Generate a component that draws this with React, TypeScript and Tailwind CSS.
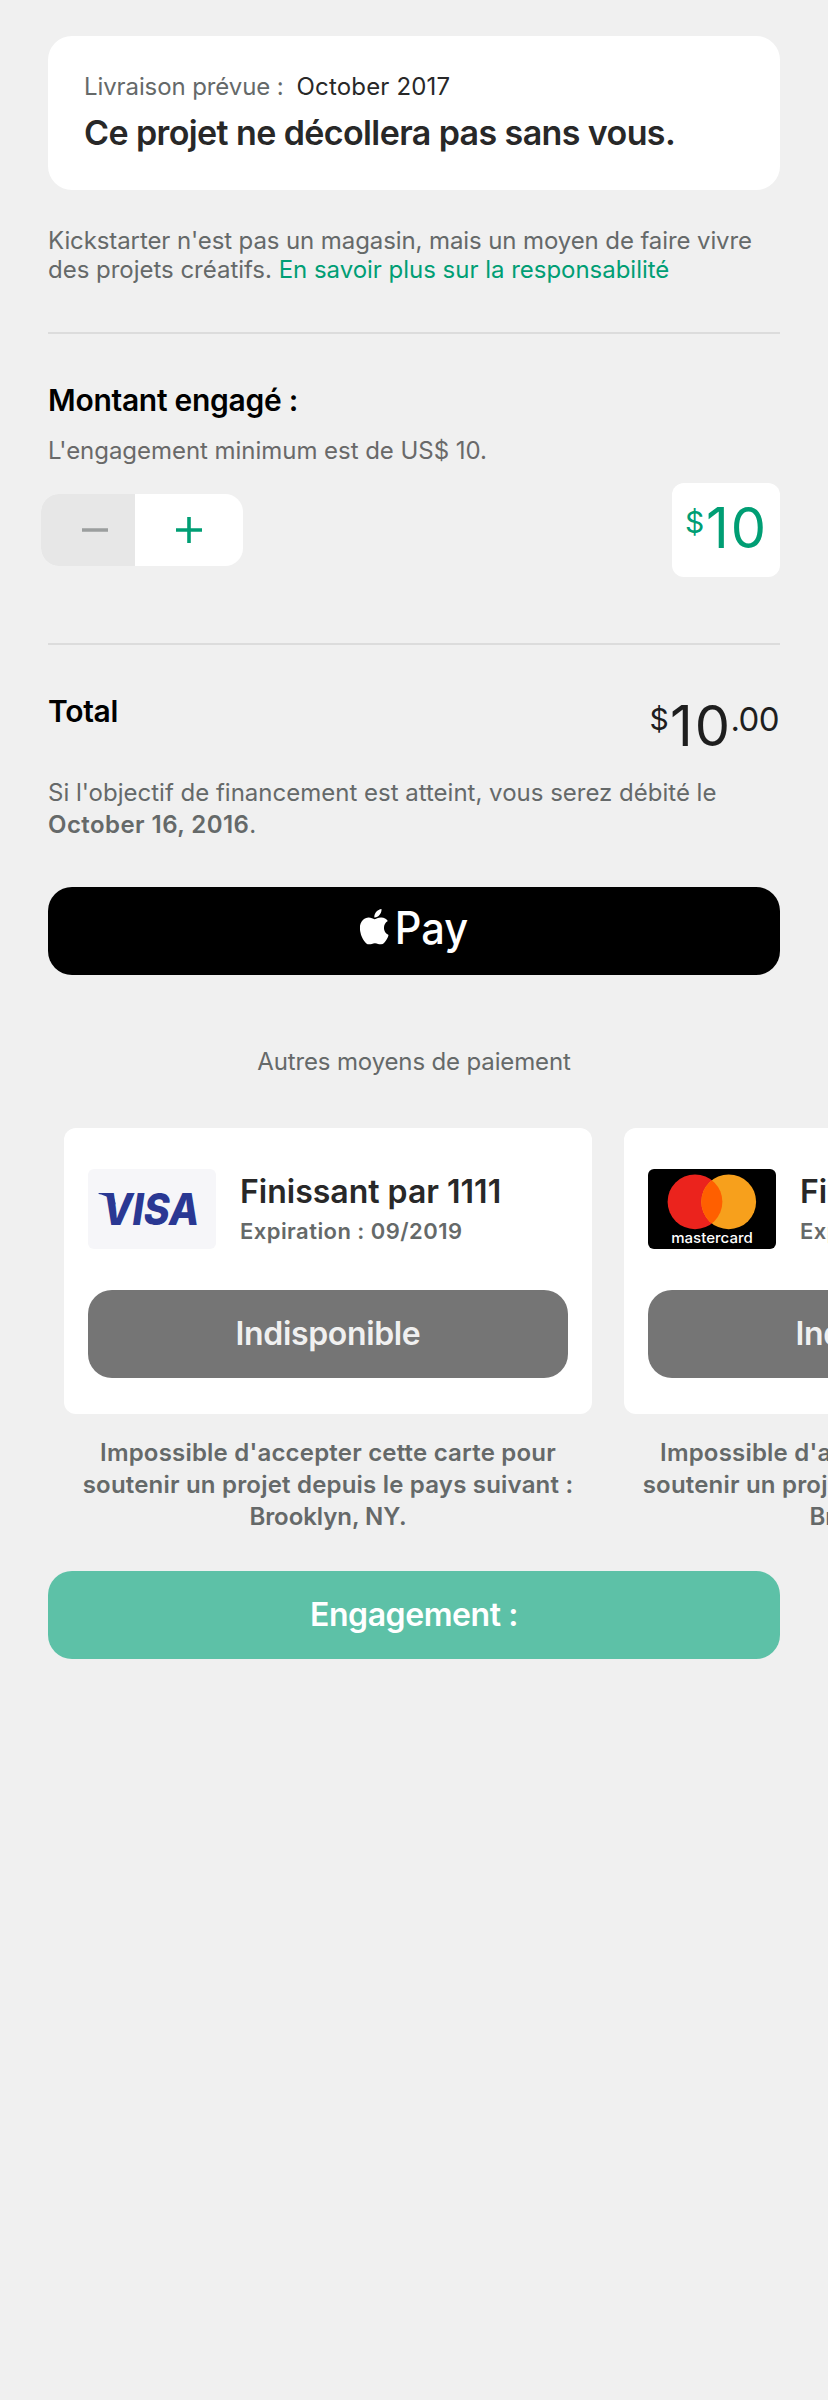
const cards = [
  { brand: "visa", title: "Finissant par 1111", expiry: "Expiration : 09/2019" },
  { brand: "mastercard", title: "Finissant par 4444", expiry: "Expiration : 10/2019" },
];

function VisaLogo() {
  return (
    <svg className="block h-20 w-32 shrink-0" viewBox="0 0 128 80">
      <rect width="128" height="80" rx="6" fill="#f6f6f9" />
      <path d="M10.6 23.9H24.5L28 36C24.5 29.5 18 26.3 10.6 24.9Z" fill="#2a3893" />
      <text
        x="14.2"
        y="55.6"
        fontFamily="Inter, sans-serif"
        fontSize="43.8"
        fontWeight="800"
        fontStyle="italic"
        fill="#2a3893"
        textLength="97"
        lengthAdjust="spacingAndGlyphs"
      >
        VISA
      </text>
    </svg>
  );
}

function MastercardLogo() {
  return (
    <svg className="block h-20 w-32 shrink-0" viewBox="0 0 128 80">
      <defs>
        <clipPath id="mc-left">
          <circle cx="47" cy="32.8" r="27.4" />
        </clipPath>
      </defs>
      <rect width="128" height="80" rx="6" fill="#000" />
      <circle cx="47" cy="32.8" r="27.4" fill="#eb231d" />
      <circle cx="80.7" cy="32.8" r="27.4" fill="#f7a01c" />
      <circle cx="80.7" cy="32.8" r="27.4" fill="#ff5f00" clipPath="url(#mc-left)" />
      <text
        x="23.2"
        y="74.2"
        fontFamily="Inter, sans-serif"
        fontSize="14.6"
        fontWeight="500"
        fill="#fff"
        textLength="81.6"
        lengthAdjust="spacingAndGlyphs"
      >
        mastercard
      </text>
    </svg>
  );
}

function ApplePayMark() {
  return (
    <svg className="block h-[88px] w-[120px]" viewBox="0 0 120 88">
      <svg x="5.9" y="22" width="28.8" height="35.6" viewBox="4 32 376.5 448" preserveAspectRatio="none">
        <path
          fill="#fff"
          d="M318.7 268.7c-.2-36.7 16.4-64.4 50-84.8-18.8-26.9-47.2-41.7-84.7-44.6-35.5-2.8-74.3 20.7-88.5 20.7-15 0-49.4-19.7-76.4-19.7C63.3 141.2 4 184.8 4 273.5q0 39.3 14.4 81.2c12.8 36.7 59 126.7 107.2 125.2 25.2-.6 43-17.9 75.8-17.9 31.8 0 48.3 17.9 76.4 17.9 48.6-.7 90.4-82.5 102.6-119.3-65.2-30.7-61.7-90-61.7-91.9zm-56.6-164.2c27.3-32.4 24.8-61.9 24-72.5-24.1 1.4-52 16.4-67.9 34.9-17.5 19.8-27.8 44.3-25.6 71.9 26.1 2 49.9-11.4 69.5-34.3z"
        />
      </svg>
      <text
        x="40.8"
        y="57"
        fontFamily="Inter, sans-serif"
        fontSize="44.5"
        fontWeight="500"
        fill="#fff"
        textLength="73.4"
        lengthAdjust="spacingAndGlyphs"
      >
        Pay
      </text>
    </svg>
  );
}

function PaymentCard({ brand, title, expiry }: { brand: string; title: string; expiry: string }) {
  return (
    <div className="w-[528px] shrink-0">
      <div className="h-[286px] rounded-xl bg-white px-6 pt-[41px]">
        <div className="flex gap-6">
          {brand === "visa" ? <VisaLogo /> : <MastercardLogo />}
          <div className="pt-[3px] font-semibold">
            <div className="text-[32px] leading-[39px] text-[#282828]">{title}</div>
            <div className="mt-[7px] text-[22px] leading-[26px] tracking-[0.45px] text-[#656969]">{expiry}</div>
          </div>
        </div>
        <button className="mt-[41px] flex h-[88px] w-full items-center justify-center rounded-3xl bg-[#757575] pb-px text-[32px] leading-[39px] font-semibold tracking-[-0.35px] text-[#f0f0f0]">
          Indisponible
        </button>
      </div>
      <div className="mt-6 flex flex-col items-center gap-[3px] text-2xl leading-[29px] font-semibold tracking-[0.2px] text-[#656969]">
        <div>Impossible d'accepter cette carte pour</div>
        <div>soutenir un projet depuis le pays suivant :</div>
        <div className="tracking-[-0.05px]">Brooklyn, NY.</div>
      </div>
    </div>
  );
}

export default function App() {
  return (
    <main className="h-[2400px] w-full overflow-hidden bg-[#f0f0f0] px-12 pt-9 font-['Inter',sans-serif] whitespace-nowrap text-[#656969]">
      <section className="h-[154px] rounded-3xl bg-white pt-[34px] pl-9">
        <div className="flex text-2xl leading-[33px]">
          <span className="tracking-[-0.1px]">Livraison prévue :</span>
          <span className="ml-[13px] tracking-[0.17px] text-[#282828]">October 2017</span>
        </div>
        <h1 className="mt-[9px] text-[34px] leading-[41px] font-semibold tracking-[-0.6px] text-[#282828]">
          Ce projet ne décollera pas sans vous.
        </h1>
      </section>

      <p className="mt-9 text-2xl leading-[29px]">
        <span className="tracking-[-0.1px]">Kickstarter n'est pas un magasin, mais un moyen de faire vivre</span>
        <br />
        <span className="tracking-[-0.02px]">
          des projets créatifs. <a className="text-[#009e74]">En savoir plus sur la responsabilité</a>
        </span>
      </p>

      <hr className="mt-12 h-0.5 border-0 bg-[#dcdcdc]" />

      <section>
        <h2 className="mt-12 text-[30px] leading-9 font-semibold tracking-[-0.28px] text-black">Montant engagé :</h2>
        <p className="mt-[18px] text-2xl leading-[29px] tracking-[-0.04px] text-[#696969]">
          L'engagement minimum est de US$ 10.
        </p>
        <div className="mt-[18px] flex h-[94px] items-center justify-between">
          <div className="-ml-[7px] flex h-[72px] w-[202px] overflow-hidden rounded-[18px] bg-white">
            <button className="flex w-[94px] items-center bg-[#e7e7e7] pl-[41px]">
              <svg className="block h-[26px] w-[26px]" viewBox="0 0 26 26">
                <path d="M0 13H26" stroke="#9b9e9e" strokeWidth="3.6" />
              </svg>
            </button>
            <button className="flex flex-1 items-center pl-[41px]">
              <svg className="block h-[26px] w-[26px]" viewBox="0 0 26 26">
                <path d="M0 13H26M13 0V26" stroke="#009e74" strokeWidth="3.6" />
              </svg>
            </button>
          </div>
          <div className="flex h-[94px] w-[108px] items-start rounded-xl bg-white pt-[11px] pl-[13px] text-[#009e74]">
            <span className="mt-[10px] w-[21px] text-[30px] leading-9">$</span>
            <span className="text-[56px] leading-[68px] tracking-[2px]">10</span>
          </div>
        </div>
      </section>

      <hr className="mt-[66px] h-0.5 border-0 bg-[#dcdcdc]" />

      <section>
        <div className="mt-[47px] flex h-[68px] items-start justify-between">
          <h2 className="mt-px text-[30px] leading-9 font-semibold tracking-[-0.3px] text-black">Total</h2>
          <div className="flex w-[131px] items-start text-[#1e1e1e]">
            <span className="mt-[9px] w-[21px] pl-[0.5px] text-[30px] leading-9">$</span>
            <span className="w-[60.5px] text-[56px] leading-[68px] tracking-[2px]">10</span>
            <span className="mt-[7px] text-[33px] leading-[40px] font-normal tracking-[-0.6px]">.00</span>
          </div>
        </div>
        <div className="mt-[18px] flex flex-col gap-[3px] text-2xl leading-[29px]">
          <div>Si l'objectif de financement est atteint, vous serez débité le</div>
          <div>
            <b className="font-semibold tracking-[0.44px]">October 16, 2016</b>.
          </div>
        </div>
      </section>

      <button className="mt-12 flex h-[88px] w-full justify-center rounded-3xl bg-black" aria-label="Apple Pay">
        <ApplePayMark />
      </button>

      <p className="mt-[72px] text-center text-2xl leading-[29px] tracking-[-0.14px]">Autres moyens de paiement</p>

      <div className="-mx-12 mt-[52px] flex gap-8 overflow-hidden pl-16">
        {cards.map((c) => (
          <PaymentCard key={c.brand} {...c} />
        ))}
      </div>

      <button className="mt-10 flex h-[88px] w-full items-center justify-center rounded-3xl bg-[#5dc1a7] pb-px text-[32px] leading-[39px] font-semibold tracking-[-0.42px] text-white">
        Engagement :
      </button>
    </main>
  );
}
